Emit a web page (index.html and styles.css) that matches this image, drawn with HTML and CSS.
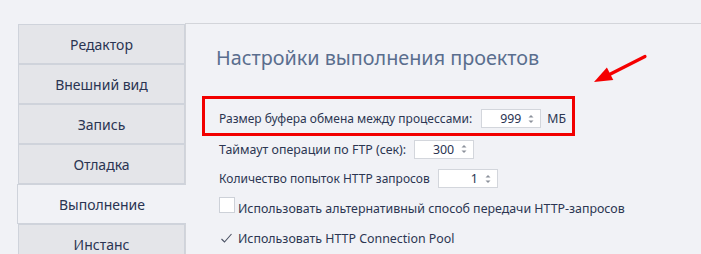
FILE: index.html
```html
<!DOCTYPE html>
<html lang="ru">
<head>
<meta charset="utf-8">
<link rel="stylesheet" href="styles.css">
</head>
<body>
<div class="app">
  <nav class="tabs">
    <div class="tab">Редактор</div>
    <div class="tab">Внешний вид</div>
    <div class="tab">Запись</div>
    <div class="tab">Отладка</div>
    <div class="tab active">Выполнение</div>
    <div class="tab">Инстанс</div>
  </nav>
  <main class="panel">
    <h1 class="title">Настройки выполнения проектов</h1>
    <div class="highlight">
      <span class="label tight">Размер буфера обмена между процессами:</span>
      <span class="spin"><span class="val">999</span><svg class="arrows" width="8" height="12" viewBox="0 0 8 12"><path d="M1.5 4.5 L4 2 L6.5 4.5 Z" fill="#8c919b"/><path d="M1.5 7.5 L4 10 L6.5 7.5 Z" fill="#8c919b"/></svg></span>
      <span class="unit">МБ</span>
    </div>
    <div class="row r2">
      <span class="label">Таймаут операции по FTP (сек):</span>
      <span class="spin"><span class="val">300</span><svg class="arrows" width="8" height="12" viewBox="0 0 8 12"><path d="M1.5 4.5 L4 2 L6.5 4.5 Z" fill="#8c919b"/><path d="M1.5 7.5 L4 10 L6.5 7.5 Z" fill="#8c919b"/></svg></span>
    </div>
    <div class="row r3">
      <span class="label tight">Количество попыток HTTP запросов</span>
      <span class="spin"><span class="val">1</span><svg class="arrows" width="8" height="12" viewBox="0 0 8 12"><path d="M1.5 4.5 L4 2 L6.5 4.5 Z" fill="#8c919b"/><path d="M1.5 7.5 L4 10 L6.5 7.5 Z" fill="#8c919b"/></svg></span>
    </div>
    <div class="row">
      <span class="box"></span>
      <span class="label">Использовать альтернативный способ передачи HTTP-запросов</span>
    </div>
    <div class="row">
      <svg class="check" width="16" height="16" viewBox="0 0 16 16"><path d="M2.5 9 L5.5 12 L12.5 4" fill="none" stroke="#4a5163" stroke-width="1.1"/></svg>
      <span class="label">Использовать HTTP Connection Pool</span>
    </div>
  </main>
  <svg class="arrow" width="701" height="254" viewBox="0 0 701 254">
    <line x1="645" y1="56.5" x2="606" y2="76.3" stroke="#f50000" stroke-width="3.2" stroke-linecap="round"/>
    <polygon points="594,82 606.9,67.5 613.3,80.1" fill="#f50000"/>
  </svg>
</div>
</body>
</html>
```
FILE: styles.css
```css
html, body {
  margin: 0;
  padding: 0;
  background: #f1f2f6;
}
body {
  width: 701px;
  height: 254px;
  overflow: hidden;
  font-family: "Noto Sans", "Open Sans", sans-serif;
  color: #2c3652;
}
.app {
  position: relative;
  display: flex;
  height: 254px;
}
.tabs {
  width: 167px;
  padding: 24px 0 0 18px;
  display: flex;
  flex-direction: column;
  flex: none;
}
.tab {
  box-sizing: border-box;
  flex: none;
  height: 40px;
  background: #e4e5e9;
  border: 1px solid #cfd3db;
  display: flex;
  align-items: center;
  justify-content: center;
  font-size: 14px;
  color: #2a3452;
}
.tab.active {
  background: #f1f2f6;
  border-right: none;
  margin-left: -1px;
  margin-right: -1px;
  position: relative;
  z-index: 1;
}
.panel {
  flex: 1;
  margin-top: 23px;
  border-top: 1px solid #d3d5da;
  border-left: 1px solid #d3d5da;
  display: flex;
  flex-direction: column;
  align-items: flex-start;
  white-space: nowrap;
}
.title {
  margin: 19px 0 0 30px;
  font-size: 19.8px;
  line-height: 30px;
  font-weight: normal;
  color: #5a6e8e;
}
.highlight {
  box-sizing: border-box;
  flex: none;
  margin: 23px 0 0 16px;
  height: 40px;
  width: 373px;
  border: 3px solid #f20000;
  display: flex;
  align-items: center;
  padding: 5px 0 0 14px;
  font-size: 12.3px;
}
.label.tight {
  font-size: 12px;
}
.highlight .spin {
  margin-left: 9px;
}
.row {
  display: flex;
  flex: none;
  align-items: center;
  height: 30px;
  margin-left: 33px;
  font-size: 12.4px;
}
.row.r2 {
  height: 26px;
  margin-bottom: 2px;
}
.row.r3 {
  height: 29px;
}
.spin {
  box-sizing: border-box;
  flex: none;
  width: 60px;
  height: 19px;
  margin-left: 8px;
  background: #fff;
  border: 1px solid #d3d6dc;
  display: flex;
  align-items: center;
  justify-content: flex-end;
  padding-right: 5px;
  color: #2a3452;
}
.val {
  margin-right: 6px;
}
.arrows {
  display: block;
}
.unit {
  margin-left: 6px;
}
.box {
  box-sizing: border-box;
  flex: none;
  width: 16px;
  height: 16px;
  background: #fff;
  border: 1px solid #cdd1d8;
  margin-right: 3px;
  margin-bottom: 6px;
}
.check {
  flex: none;
  margin-right: 3px;
}
.arrow {
  position: absolute;
  left: 0;
  top: 0;
  pointer-events: none;
}
```
